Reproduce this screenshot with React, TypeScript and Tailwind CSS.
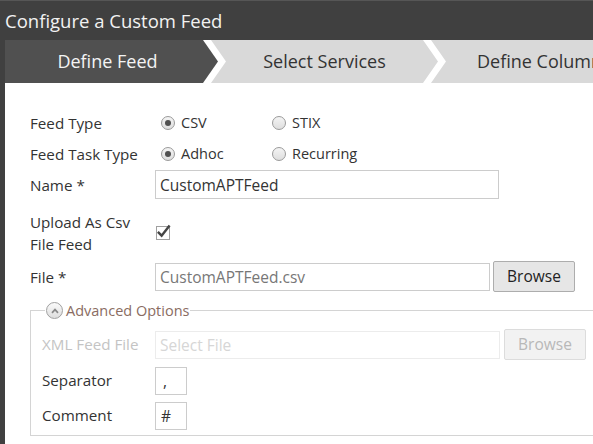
import React from 'react';

const font = { fontFamily: '"Open Sans", "Liberation Sans", sans-serif' };

function Radio({ checked }: { checked?: boolean }) {
  return (
    <span className="flex h-[14px] w-[14px] items-center justify-center rounded-full border border-[#9a9a9a] bg-gradient-to-b from-[#f4f4f4] to-[#dedede]">
      {checked && <span className="h-[6px] w-[6px] rounded-full bg-[#505050]" />}
    </span>
  );
}

function RadioGroup({ options, selected }: { options: string[]; selected: number }) {
  return (
    <div className="flex items-center pl-[6px]">
      {options.map((o, i) => (
        <label key={o} className="flex w-[111px] items-center gap-[6px] text-[14.5px] text-[#333]">
          <Radio checked={i === selected} />
          <span>{o}</span>
        </label>
      ))}
    </div>
  );
}

function Row({ label, children, className = '' }: { label: React.ReactNode; children?: React.ReactNode; className?: string }) {
  return (
    <div className={`flex items-center ${className}`}>
      <div className="w-[125px] shrink-0 text-[15.2px] leading-[22px] text-[#333]">{label}</div>
      {children}
    </div>
  );
}

export default function App() {
  return (
    <div className="h-[444px] w-[593px] overflow-hidden bg-[#404040]" style={font}>
      {/* title bar */}
      <div className="flex h-[40px] items-center border-t border-[#565656] pl-[5px] text-[18.5px] text-[#f2f2f2]">
        Configure a Custom Feed
      </div>

      <div className="ml-[5px] flex h-[404px] flex-col bg-white">
        {/* wizard steps */}
        <div className="flex h-[43px] shrink-0 bg-[#d9d9d9] text-[18px]">
          <div className="h-full w-[221px] shrink-0 bg-white pr-[8px] [clip-path:polygon(0_0,calc(100%-15px)_0,100%_50%,calc(100%-15px)_100%,0_100%)]">
            <div className="flex h-full items-center justify-center pr-[8px] text-[#f4f4f4] bg-[#505050] [clip-path:polygon(0_0,calc(100%-15px)_0,100%_50%,calc(100%-15px)_100%,0_100%)]">
              Define Feed
            </div>
          </div>
          <div className="flex w-[197px] shrink-0 items-center justify-center text-[#333]">Select Services</div>
          <div className="h-full w-[23px] shrink-0 bg-white [clip-path:polygon(0_0,8px_0,23px_50%,8px_100%,0_100%,15px_50%)]" />
          <div className="flex min-w-0 flex-1 items-center overflow-hidden whitespace-nowrap pl-[31px] text-[#333]">Define Columns</div>
        </div>

        {/* form */}
        <div className="flex flex-col pl-[25px] pt-[24px]">
          <Row label="Feed Type" className="h-[31px]">
            <RadioGroup options={['CSV', 'STIX']} selected={0} />
          </Row>
          <Row label="Feed Task Type" className="h-[31px]">
            <RadioGroup options={['Adhoc', 'Recurring']} selected={0} />
          </Row>
          <Row label="Name *" className="h-[31px]">
            <input
              readOnly
              value="CustomAPTFeed"
              className="h-[29px] w-[344px] border border-[#cccccc] px-[4px] text-[15.5px] text-[#333] outline-none"
              style={font}
            />
          </Row>
          <Row
            label={
              <>
                Upload As Csv
                <br />
                File Feed
              </>
            }
            className="h-[61px] pt-[5px]"
          >
            <span className="ml-[1px] flex h-[14px] w-[14px] items-end justify-center border border-[#a0a0a0] bg-white">
              <svg viewBox="0 0 16 16" className="-mt-[5px] mb-[0px] h-[15px] w-[15px] overflow-visible">
                <path d="M2 8.5 L6 12.5 L14.5 1.5" fill="none" stroke="#454545" strokeWidth="2.6" />
              </svg>
            </span>
          </Row>
          <Row label="File *" className="h-[31px]">
            <input
              readOnly
              value="CustomAPTFeed.csv"
              className="h-[28px] w-[335px] border border-[#cccccc] px-[4px] text-[15.5px] text-[#777] outline-none"
              style={font}
            />
            <button className="ml-[3px] h-[31px] w-[82px] rounded-[2px] border border-[#adadad] bg-[#e6e6e6] text-[15.5px] text-[#222]">
              Browse
            </button>
          </Row>

          <fieldset className="mt-[8px] w-[600px] border border-[#d4d4d4] pb-[4px] pl-[11px] pt-[8px]">
            <legend className="ml-[3px] flex items-center gap-[3px] px-[1px] text-[14.5px] text-[#8a6c62]">
              <span className="flex h-[17px] w-[17px] shrink-0 items-center justify-center rounded-full border border-[#a0a0a0] bg-gradient-to-b from-[#fafafa] to-[#dedede]">
                <svg viewBox="0 0 10 10" className="h-[10px] w-[10px]">
                  <path d="M2 6.8 L5 3.6 L8 6.8" fill="none" stroke="#888" strokeWidth="1.7" />
                </svg>
              </span>
              Advanced Options
            </legend>
            <div className="flex h-[30px] items-center">
              <div className="w-[113px] shrink-0 text-[15.2px] text-[#c4c4c4]">XML Feed File</div>
              <input
                readOnly
                placeholder="Select File"
                className="h-[28px] w-[345px] border border-[#ececec] px-[4px] text-[15.5px] outline-none placeholder:text-[#d6d6d6]"
                style={font}
              />
              <button className="ml-[4px] h-[31px] w-[82px] rounded-[2px] border border-[#dcdcdc] bg-[#f2f2f2] text-[15.5px] text-[#b8b8b8]">
                Browse
              </button>
            </div>
            <div className="mt-[6px] flex h-[30px] items-center">
              <div className="w-[113px] shrink-0 text-[15.2px] text-[#333]">Separator</div>
              <input
                readOnly
                value=","
                className="h-[28px] w-[32px] border border-[#cccccc] px-[7px] text-[15.5px] text-[#333] outline-none"
                style={font}
              />
            </div>
            <div className="mt-[5px] flex h-[30px] items-center">
              <div className="w-[113px] shrink-0 text-[15.2px] text-[#333]">Comment</div>
              <input
                readOnly
                value="#"
                className="h-[28px] w-[32px] border border-[#cccccc] px-[5px] text-[15.5px] text-[#333] outline-none"
                style={font}
              />
            </div>
          </fieldset>
        </div>
      </div>
    </div>
  );
}
